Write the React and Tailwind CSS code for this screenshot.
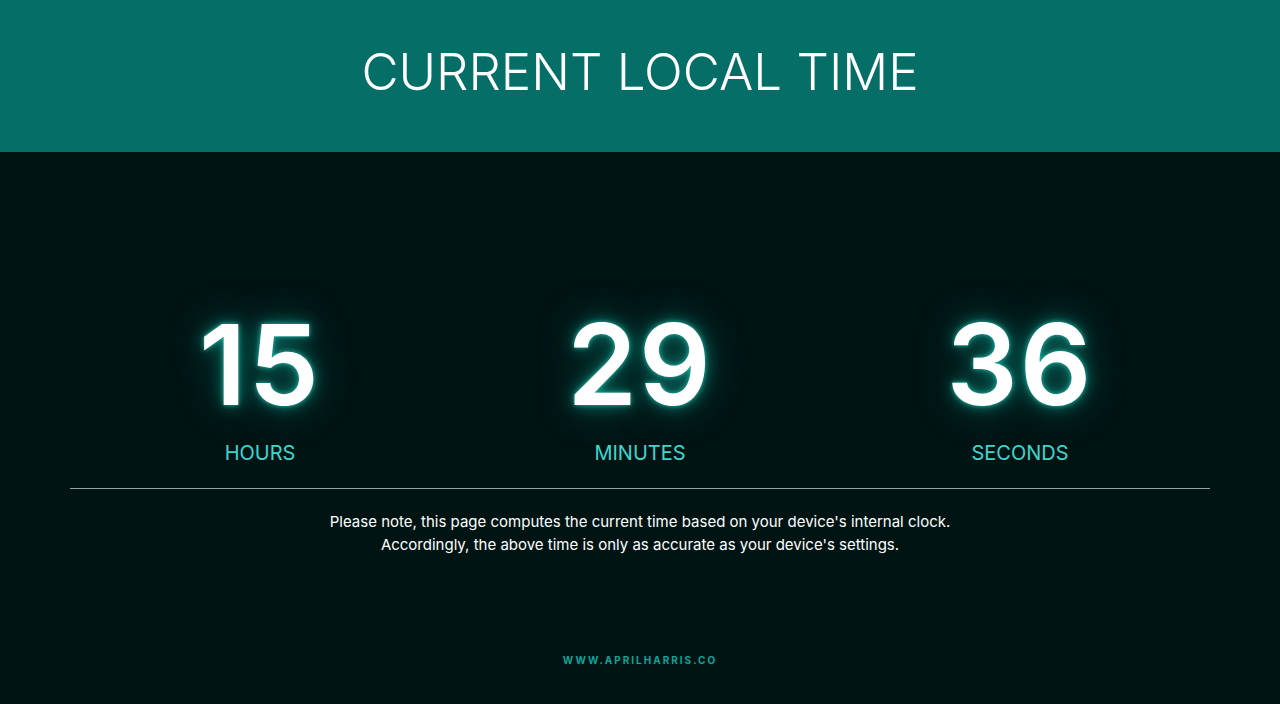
import React from 'react';

const units = [
  { value: '15', label: 'HOURS' },
  { value: '29', label: 'MINUTES' },
  { value: '36', label: 'SECONDS' },
];

const App = () => {
  return (
    <div className="min-h-[704px] bg-[#011414] font-['Inter',sans-serif] text-white">
      <header className="flex h-[152px] items-center justify-center bg-[#046e67]">
        <h1 className="-mt-[8px] text-[51px] font-light text-white">CURRENT LOCAL TIME</h1>
      </header>

      <main className="px-[70px] pt-[150px]">
        <div className="grid grid-cols-3">
          {units.map((u) => (
            <div key={u.label} className="flex flex-col items-center">
              <div className="text-[112px] leading-[124px] font-semibold tracking-[2px] text-white [text-shadow:0_0_5px_rgba(45,212,191,0.8),0_0_16px_rgba(20,184,166,0.6),0_0_40px_rgba(20,184,166,0.4)]">
                {u.value}
              </div>
              <div className="mt-[13px] text-[20px] leading-[28px] text-[#3dd6cf]">{u.label}</div>
            </div>
          ))}
        </div>

        <hr className="mt-[21px] border-0 border-t border-[#9aa3a3]" />

        <p className="mt-[21px] text-center text-[15px] leading-[23px] text-white">
          Please note, this page computes the current time based on your device's internal clock.
          <br />
          Accordingly, the above time is only as accurate as your device's settings.
        </p>
      </main>

      <footer className="pt-[90px] pb-[46px] text-center">
        <span className="text-[10px] font-bold tracking-[2px] text-[#0fa39b]">WWW.APRILHARRIS.CO</span>
      </footer>
    </div>
  );
};

export default App;
